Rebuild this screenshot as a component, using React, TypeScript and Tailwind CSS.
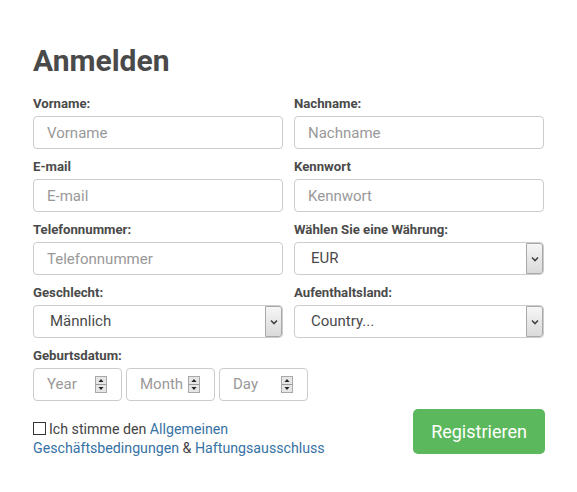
import { ReactNode } from 'react'

function Label({ children }: { children: ReactNode }) {
  return (
    <label className="block text-[13.2px] leading-4 font-bold text-[#4a4a4a] mb-1">
      {children}
    </label>
  )
}

function TextField({ label, placeholder, type = 'text' }: { label: string; placeholder: string; type?: string }) {
  return (
    <div>
      <Label>{label}</Label>
      <input
        type={type}
        placeholder={placeholder}
        className="block w-full h-[33px] px-[13px] border border-[#cccccc] rounded-[4px] text-[15px] text-[#555] placeholder:text-[#999] outline-none bg-white"
      />
    </div>
  )
}

function Chevron() {
  return (
    <svg width="8" height="6" viewBox="0 0 8 6">
      <path d="M1 1.5 L4 4.5 L7 1.5" fill="none" stroke="#444" strokeWidth="1.6" />
    </svg>
  )
}

function SelectField({ label, value }: { label: string; value: string }) {
  return (
    <div>
      <Label>{label}</Label>
      <div className="flex h-[33px] border border-[#cccccc] rounded-[4px] bg-white overflow-hidden">
        <div className="flex-1 flex items-center pl-[16px] text-[15px] text-[#4a4a4a]">{value}</div>
        <div className="w-[17px] flex items-center justify-center border border-[#a9a9a9] rounded-r-[3px] bg-gradient-to-b from-[#f6f6f6] to-[#dadada]">
          <Chevron />
        </div>
      </div>
    </div>
  )
}

function Spinner() {
  return (
    <svg width="12" height="17" viewBox="0 0 12 17">
      <rect x="0.5" y="0.5" width="11" height="16" fill="#e6e6e6" stroke="#a8a8a8" />
      <line x1="1" y1="8.5" x2="11" y2="8.5" stroke="#9a9a9a" />
      <path d="M3.5 6 L6 3 L8.5 6 Z" fill="#222" />
      <path d="M3.5 11 L6 14 L8.5 11 Z" fill="#222" />
    </svg>
  )
}

function DateBox({ placeholder }: { placeholder: string }) {
  return (
    <div className="w-[89px] h-[33px] flex items-center border border-[#cccccc] rounded-[4px] pl-[13px] pr-[14px]">
      <span className="flex-1 text-[15px] text-[#999]">{placeholder}</span>
      <Spinner />
    </div>
  )
}

export default function App() {
  return (
    <div className="min-h-screen bg-white font-['Roboto',sans-serif]">
      <div className="w-[545px] pl-[33px] pt-[43px]">
        <h1 className="text-[30px] leading-9 font-bold text-[#4a4a4a] mb-[17px]">Anmelden</h1>

        <div className="grid grid-cols-2 gap-x-[11px] gap-y-[10px] w-[511px]">
          <TextField label="Vorname:" placeholder="Vorname" />
          <TextField label="Nachname:" placeholder="Nachname" />
          <TextField label="E-mail" placeholder="E-mail" type="email" />
          <TextField label="Kennwort" placeholder="Kennwort" type="password" />
          <TextField label="Telefonnummer:" placeholder="Telefonnummer" />
          <SelectField label="Wählen Sie eine Währung:" value="EUR" />
          <SelectField label="Geschlecht:" value="Männlich" />
          <SelectField label="Aufenthaltsland:" value="Country..." />
        </div>

        <div className="mt-[10px]">
          <Label>Geburtsdatum:</Label>
          <div className="flex gap-1">
            <DateBox placeholder="Year" />
            <DateBox placeholder="Month" />
            <DateBox placeholder="Day" />
          </div>
        </div>

        <div className="flex justify-between items-start mt-2">
          <p className="mt-[11px] text-[14.2px] leading-[19px] text-[#444]">
            <span className="inline-block w-[13px] h-[13px] border border-[#333] bg-white mr-[3px] align-[-1px]" />
            Ich stimme den <a className="text-[#3672a4]">Allgemeinen</a>
            <br />
            <a className="text-[#3672a4]">Geschäftsbedingungen</a> &amp;{' '}
            <a className="text-[#3672a4]">Haftungsausschluss</a>
          </p>
          <button className="w-[132px] h-[45px] rounded-[5px] bg-[#5cb85c] text-white text-[18px]">
            Registrieren
          </button>
        </div>
      </div>
    </div>
  )
}
